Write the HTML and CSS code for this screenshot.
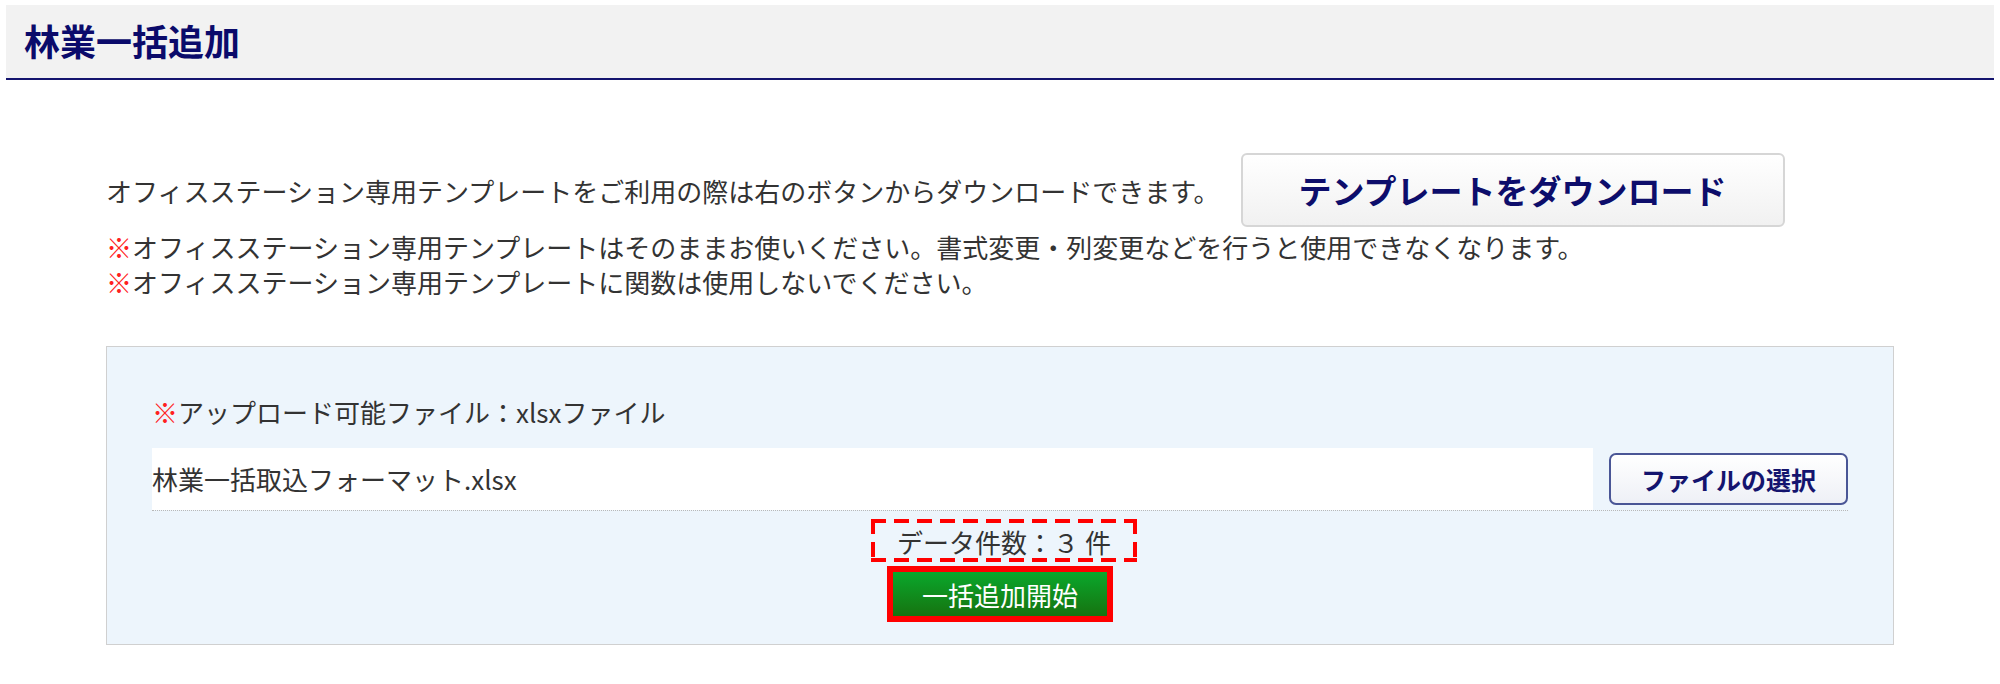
FILE: index.html
```html
<!DOCTYPE html>
<html lang="ja">
<head>
    <meta charset="UTF-8">
    <meta name="viewport" content="width=device-width, initial-scale=1.0">
    <title>林業一括追加</title>
    <link rel="stylesheet" href="styles.css">
</head>
<body>
    <div class="page-header">
        <h1 class="page-title">林業一括追加</h1>
    </div>

    <div class="content">
        <div class="template-row">
            <p class="template-text">オフィスステーション専用テンプレートをご利用の際は右のボタンからダウンロードできます。</p>
            <button class="download-btn" type="button">テンプレートをダウンロード</button>
        </div>
        <p class="note"><span class="mark">※</span>オフィスステーション専用テンプレートはそのままお使いください。書式変更・列変更などを行うと使用できなくなります。</p>
        <p class="note"><span class="mark">※</span>オフィスステーション専用テンプレートに関数は使用しないでください。</p>

        <div class="upload-panel">
            <p class="upload-note"><span class="mark">※</span>アップロード可能ファイル：xlsxファイル</p>
            <div class="file-row">
                <div class="file-name">林業一括取込フォーマット.xlsx</div>
                <button class="file-btn" type="button">ファイルの選択</button>
            </div>
            <div class="count-box">データ件数：３ 件</div>
            <button class="start-btn" type="button">一括追加開始</button>
        </div>
    </div>
</body>
</html>
```

FILE: styles.css
```css
body {
    margin: 0;
    padding: 0;
    background-color: #ffffff;
    font-family: "Noto Sans CJK JP", "Noto Sans", sans-serif;
    color: #333333;
}

p {
    margin: 0;
}

button {
    font-family: "Noto Sans CJK JP", "Noto Sans", sans-serif;
    cursor: pointer;
}

.page-header {
    margin: 5px 6px 0;
    height: 73px;
    background-color: #f2f2f2;
    border-bottom: 2px solid #14146e;
}

.page-title {
    margin: 0;
    padding-left: 18px;
    font-size: 36px;
    font-weight: 700;
    line-height: 70px;
    color: #0b0b6b;
}

.content {
    width: 1788px;
    margin: 73px auto 0;
}

.template-row {
    display: flex;
    align-items: center;
    height: 74px;
}

.template-text {
    font-size: 26px;
    line-height: 35px;
}

.download-btn {
    margin-left: 21px;
    width: 544px;
    height: 74px;
    padding: 0;
    border: 2px solid #d6d6d6;
    border-radius: 6px;
    background: linear-gradient(#ffffff, #f1f1f1);
    font-size: 33px;
    font-weight: 700;
    color: #0d0d6b;
}

.note {
    font-size: 26px;
    line-height: 35px;
}

.template-row + .note {
    margin-top: 2px;
}

.mark {
    color: #ff2020;
}

.upload-panel {
    margin-top: 47px;
    padding: 47px 45px 22px;
    background-color: #edf5fc;
    border: 1px solid #d0d0d0;
    display: flex;
    flex-direction: column;
    align-items: center;
}

.upload-note {
    align-self: stretch;
    font-size: 26px;
    line-height: 36px;
}

.file-row {
    align-self: stretch;
    margin-top: 18px;
    display: flex;
    align-items: center;
    justify-content: space-between;
    border-bottom: 1px dotted #b8b8b8;
}

.file-name {
    width: 1441px;
    height: 62px;
    background-color: #ffffff;
    font-size: 26px;
    line-height: 62px;
}

.file-btn {
    width: 239px;
    height: 52px;
    padding: 0;
    border: 2px solid #4a5696;
    border-radius: 7px;
    background: linear-gradient(#ffffff, #eef0f6);
    font-size: 25px;
    font-weight: 700;
    color: #14146e;
}

/* dashed frame drawn with gradients so the dashes are long like the original */
.count-box {
    box-sizing: border-box;
    margin-top: 8px;
    margin-left: 8px;
    width: 266px;
    height: 43px;
    padding-top: 6px;
    background:
        repeating-linear-gradient(90deg, #ff0000 0 15px, transparent 15px 23px) top left / 100% 4px no-repeat,
        repeating-linear-gradient(90deg, #ff0000 0 15px, transparent 15px 23px) bottom left / 100% 4px no-repeat,
        repeating-linear-gradient(180deg, #ff0000 0 15px, transparent 15px 23px) top left / 4px 100% no-repeat,
        repeating-linear-gradient(180deg, #ff0000 0 15px, transparent 15px 23px) top right / 4px 100% no-repeat;
    font-size: 26px;
    line-height: 33px;
    text-align: center;
}

.start-btn {
    margin-top: 4px;
    width: 226px;
    height: 56px;
    padding: 0;
    border: 6px solid #ff0000;
    background: linear-gradient(#0aa82c, #167310);
    font-size: 26px;
    color: #ffffff;
}
```
